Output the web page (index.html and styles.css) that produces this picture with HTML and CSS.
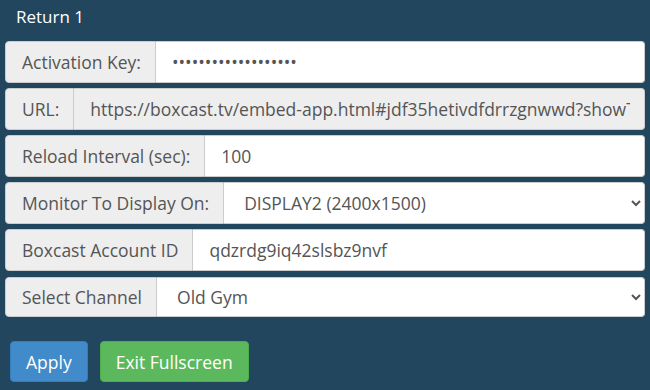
FILE: index.html
```html
<!DOCTYPE html>
<html>
<head>
  <title>Return 1</title>
  <link rel="stylesheet" href="styles.css">
</head>
<body>
  <div class="panel">
    <h2 class="panel-title">Return 1</h2>
    <div class="settings">
      <div class="input-group">
        <span class="addon">Activation Key:</span>
        <input class="field" type="password" value="abcdefghijklmnopqrs">
      </div>
      <div class="input-group">
        <span class="addon">URL:</span>
        <input class="field" type="text" value="https://boxcast.tv/embed-app.html#jdf35hetivdfdrrzgnwwd?showTitle=1">
      </div>
      <div class="input-group">
        <span class="addon">Reload Interval (sec):</span>
        <input class="field" type="text" value="100">
      </div>
      <div class="input-group">
        <span class="addon">Monitor To Display On:</span>
        <select class="field">
          <option>DISPLAY2 (2400x1500)</option>
          <option>DISPLAY1 (1920x1080)</option>
        </select>
      </div>
      <div class="input-group">
        <span class="addon">Boxcast Account ID</span>
        <input class="field" type="text" value="qdzrdg9iq42slsbz9nvf">
      </div>
      <div class="input-group short">
        <span class="addon">Select Channel</span>
        <select class="field">
          <option>Old Gym</option>
          <option>New Gym</option>
        </select>
      </div>
    </div>
    <div class="actions">
      <button class="btn btn-apply">Apply</button>
      <button class="btn btn-exit">Exit Fullscreen</button>
    </div>
  </div>
</body>
</html>
```

FILE: styles.css
```css
body {
  margin: 0;
  background-color: #22465e;
  font-family: "Open Sans", "Liberation Sans", sans-serif;
}
.panel {
  padding: 0 5px;
}
.panel-title {
  margin: 0;
  padding: 6px 11px 0;
  height: 35px;
  color: white;
  font-size: 17px;
  font-weight: normal;
  line-height: 22px;
}
.settings {
  display: flex;
  flex-direction: column;
  gap: 5px;
}
.input-group {
  display: flex;
  height: 42px;
}
.input-group.short {
  height: 40px;
  margin-top: 1px;
}
.addon {
  display: flex;
  align-items: center;
  padding: 0 14px 0 16px;
  background-color: #eeeeee;
  border: 1px solid #cccccc;
  border-radius: 4px 0 0 4px;
  color: #555555;
  font-size: 17.5px;
  white-space: nowrap;
}
.field {
  flex: 1;
  min-width: 0;
  margin: 0;
  padding: 0 14px 0 16px;
  background-color: white;
  border: 1px solid #cccccc;
  border-left: 0;
  border-radius: 0 4px 4px 0;
  color: #555555;
  font-family: inherit;
  font-size: 17.5px;
}
.input-group:nth-child(2) .field {
  background-color: #eeeeee;
}
select.field {
  padding: 0 6px 0 16px;
}
.actions {
  display: flex;
  gap: 12px;
  padding: 24px 5px 0;
}
.btn {
  height: 41px;
  padding: 0 15px;
  border: 1px solid transparent;
  border-radius: 4px;
  color: white;
  font-family: inherit;
  font-size: 17.5px;
}
.btn-apply {
  background-color: #428bca;
  border-color: #357ebd;
}
.btn-exit {
  background-color: #5cb85c;
  border-color: #4cae4c;
}
```
